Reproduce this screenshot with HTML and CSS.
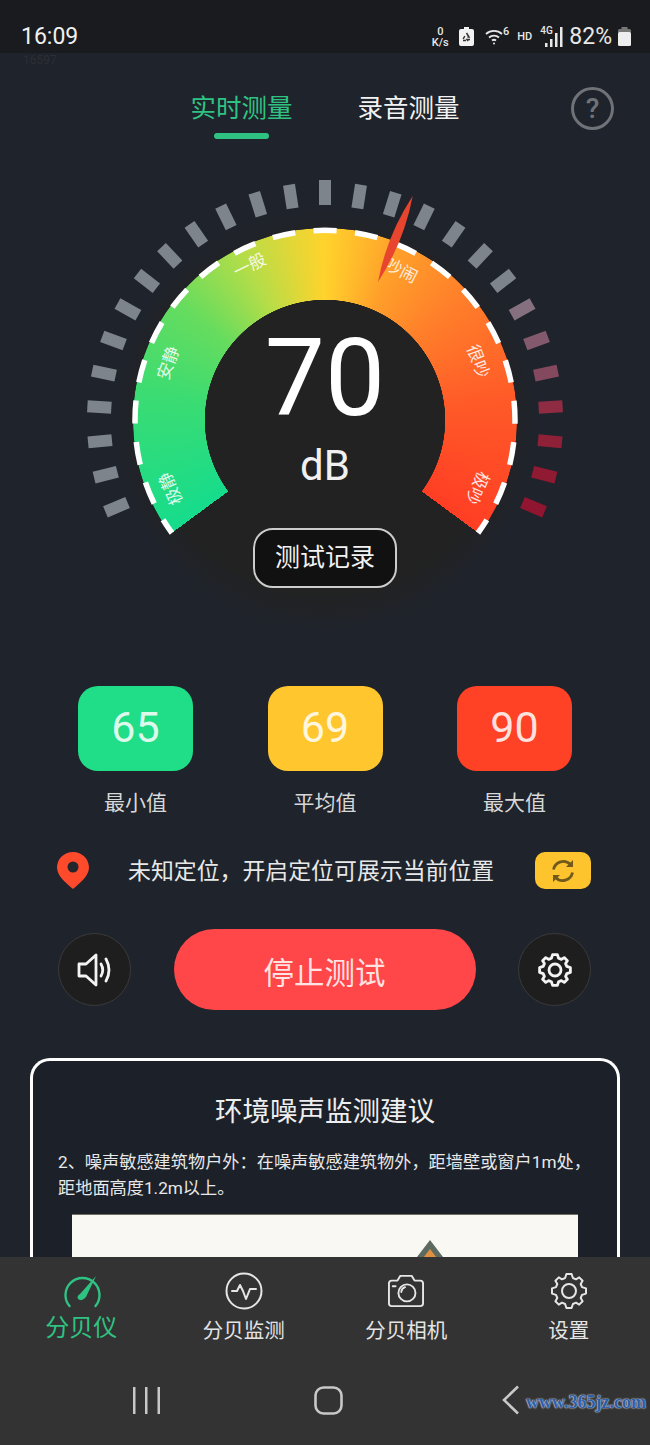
FILE: index.html
```html
<!DOCTYPE html>
<html lang="zh-CN">
<head>
  <meta charset="UTF-8">
  <meta name="viewport" content="width=device-width, initial-scale=1">
  <title>分贝仪</title>
  <link rel="stylesheet" href="styles.css">
</head>
<body>
<div class="phone">

  <!-- status bar -->
  <div class="status">
    <span class="status-time">16:09</span>
    <div class="status-icons">
      <span class="speed">0<br>K/s</span>
      <svg class="ic-saver" width="15" height="19" viewBox="0 0 15 19">
        <path d="M5 0h5v2h3a2 2 0 0 1 2 2v13a2 2 0 0 1-2 2H2a2 2 0 0 1-2-2V4a2 2 0 0 1 2-2h3z" fill="#f2f2f2"/>
        <path d="M7.5 6l2.5 4h-1.6M4.2 12l1.6-3M11 12.5H8l1 1.6M4 13.5h3" fill="none" stroke="#333" stroke-width="1.5"/>
      </svg>
      <span class="wifi">
        <svg width="18" height="18" viewBox="0 0 18 18" fill="none" stroke="#e8e8e8" stroke-width="1.8">
          <path d="M1 7a12 12 0 0 1 16 0"/>
          <path d="M4 10.5a7.500 7.500 0 0 1 10 0"/>
          <path d="M7 13.500a3.200 3.200 0 0 1 4 0"/>
          <circle cx="9" cy="16.500" r="1" fill="#e8e8e8" stroke="none"/>
        </svg>
        <b class="wifi-num">6</b>
      </span>
      <span class="hd">HD</span>
      <span class="signal">
        <b class="signal-4g">4G</b>
        <svg width="19" height="20" viewBox="0 0 19 20" fill="#e8e8e8">
          <rect x="0" y="16" width="2.500" height="4"/>
          <rect x="5" y="12" width="2.500" height="8"/>
          <rect x="10" y="6" width="2.500" height="14"/>
          <rect x="15" y="0" width="2.500" height="20"/>
        </svg>
      </span>
      <span class="status-pct">82%</span>
      <svg width="13" height="19" viewBox="0 0 13 19">
        <rect x="3.500" y="0" width="6" height="3" fill="#777"/>
        <rect x="0" y="2" width="13" height="4" rx="1.500" fill="#777"/>
        <rect x="0" y="5" width="13" height="14" rx="1.500" fill="#eee"/>
      </svg>
    </div>
  </div>

  <div class="main">
    <div class="ghost">16597</div>

    <!-- tabs -->
    <div class="tabs">
      <div class="tabs-list">
        <div class="tab tab-on">实时测量<i class="tab-bar"></i></div>
        <div class="tab">录音测量</div>
      </div>
      <div class="help">?</div>
    </div>

    <!-- gauge -->
    <div class="gauge">
      <div class="gauge-disc"></div>
      <div class="gauge-arc"></div>
      <svg class="gauge-svg" width="500" height="450" viewBox="0 0 500 450">
        <g stroke="#7e848c" stroke-width="12">
          <line x1="250" y1="12" x2="250" y2="36" transform="rotate(-112.7 250 250)"/>
          <line x1="250" y1="12" x2="250" y2="36" transform="rotate(-104 250 250)"/>
          <line x1="250" y1="12" x2="250" y2="36" transform="rotate(-95.4 250 250)"/>
          <line x1="250" y1="12" x2="250" y2="36" transform="rotate(-86.7 250 250)"/>
          <line x1="250" y1="12" x2="250" y2="36" transform="rotate(-78 250 250)"/>
          <line x1="250" y1="12" x2="250" y2="36" transform="rotate(-69.4 250 250)"/>
          <line x1="250" y1="12" x2="250" y2="36" transform="rotate(-60.7 250 250)"/>
          <line x1="250" y1="12" x2="250" y2="36" transform="rotate(-52 250 250)"/>
          <line x1="250" y1="12" x2="250" y2="36" transform="rotate(-43.4 250 250)"/>
          <line x1="250" y1="12" x2="250" y2="36" transform="rotate(-34.7 250 250)"/>
          <line x1="250" y1="12" x2="250" y2="36" transform="rotate(-26 250 250)"/>
          <line x1="250" y1="12" x2="250" y2="36" transform="rotate(-17.3 250 250)"/>
          <line x1="250" y1="12" x2="250" y2="36" transform="rotate(-8.7 250 250)"/>
          <line x1="250" y1="10" x2="250" y2="35"/>
          <line x1="250" y1="12" x2="250" y2="36" transform="rotate(8.7 250 250)"/>
          <line x1="250" y1="12" x2="250" y2="36" transform="rotate(17.3 250 250)"/>
          <line x1="250" y1="12" x2="250" y2="36" transform="rotate(26 250 250)"/>
          <line x1="250" y1="12" x2="250" y2="36" transform="rotate(34.7 250 250)"/>
          <line x1="250" y1="12" x2="250" y2="36" transform="rotate(43.4 250 250)"/>
          <line x1="250" y1="12" x2="250" y2="36" transform="rotate(52 250 250)"/>
          <line x1="250" y1="12" x2="250" y2="36" stroke="#84707e" transform="rotate(60.7 250 250)"/>
          <line x1="250" y1="12" x2="250" y2="36" stroke="#82596d" transform="rotate(69.4 250 250)"/>
          <line x1="250" y1="12" x2="250" y2="36" stroke="#84485f" transform="rotate(78 250 250)"/>
          <line x1="250" y1="12" x2="250" y2="36" stroke="#8f2c44" transform="rotate(86.7 250 250)"/>
          <line x1="250" y1="12" x2="250" y2="36" stroke="#8e2038" transform="rotate(95.4 250 250)"/>
          <line x1="250" y1="12" x2="250" y2="36" stroke="#911a33" transform="rotate(104 250 250)"/>
          <line x1="250" y1="12" x2="250" y2="36" stroke="#8f1530" transform="rotate(112.7 250 250)"/>
        </g>
        <!-- dashes on the outer edge, 126.4deg each side of the top -->
        <path class="gauge-dash" d="M97 363A190 190 0 1 1 403 363"/>
        <g class="gauge-labels">
          <text x="250" y="81" transform="rotate(-114 250 250)">极静</text>
          <text x="250" y="83" transform="rotate(-70 250 250)">安静</text>
          <text x="250" y="78" transform="rotate(-26 250 250)">一般</text>
          <text x="250" y="82" transform="rotate(27 250 250)">吵闹</text>
          <text x="250" y="86" transform="rotate(69 250 250)">很吵</text>
          <text x="250" y="83" transform="rotate(114 250 250)">极吵</text>
        </g>
        <path d="M337.700 26Q329 72 303 112Q311.500 66 337.700 26Z" fill="#e8452f"/>
      </svg>
      <div class="gauge-num">70</div>
      <div class="gauge-unit">dB</div>
      <div class="gauge-btn">测试记录</div>
    </div>

    <!-- min / avg / max -->
    <div class="stats">
      <div class="stat">
        <div class="stat-box stat-green">65</div>
        <div class="stat-label">最小值</div>
      </div>
      <div class="stat">
        <div class="stat-box stat-yellow">69</div>
        <div class="stat-label">平均值</div>
      </div>
      <div class="stat">
        <div class="stat-box stat-red">90</div>
        <div class="stat-label">最大值</div>
      </div>
    </div>

    <!-- location -->
    <div class="loc">
      <svg width="32" height="37" viewBox="0 0 32 37">
        <path d="M16 0C7 0 0 7 0 15.500C0 24 9 31 16 37C23 31 32 24 32 15.500C32 7 25 0 16 0Z" fill="#ff4a2c"/>
        <circle cx="16" cy="15" r="5.500" fill="#23262c"/>
      </svg>
      <div class="loc-text">未知定位，开启定位可展示当前位置</div>
      <div class="loc-btn">
        <svg width="26" height="26" viewBox="0 0 26 26" fill="none" stroke="#72591c" stroke-width="2.800">
          <path d="M3.500 11.500A10 10 0 0 1 20.500 6.500"/>
          <path d="M22.500 14.500A10 10 0 0 1 5.500 19.500"/>
          <path d="M23 2v7h-7z" fill="#72591c" stroke="none"/>
          <path d="M3 24v-7h7z" fill="#72591c" stroke="none"/>
        </svg>
      </div>
    </div>

    <!-- controls -->
    <div class="controls">
      <div class="round-btn">
        <svg width="36" height="34" viewBox="0 0 36 34" fill="none" stroke="#f4f4f4" stroke-width="2.800" stroke-linejoin="round" stroke-linecap="round">
          <path d="M2 11H9L19 2V32L9 23H2Z"/>
          <path d="M24 11Q27.500 17 24 23"/>
          <path d="M29 6Q35 17 29 28"/>
        </svg>
      </div>
      <div class="stop-btn">停止测试</div>
      <div class="round-btn">
        <svg width="36" height="36" viewBox="-18 -18 36 36" fill="none" stroke="#f4f4f4" stroke-width="2.800" stroke-linejoin="round">
          <path d="M-2.400-15.400L2.400-15.400 3.600-11.800 6.400-10.600 9.200-12.400 12.400-9.200 10.600-6.400 11.800-3.600 15.400-2.400 15.400 2.400 11.800 3.600 10.600 6.400 12.400 9.200 9.200 12.400 6.400 10.600 3.600 11.800 2.400 15.400-2.400 15.400-3.600 11.800-6.400 10.600-9.200 12.400-12.400 9.200-10.600 6.400-11.800 3.600-15.400 2.400-15.400-2.400-11.800-3.600-10.600-6.400-12.400-9.200-9.200-12.400-6.400-10.600-3.600-11.800Z"/>
          <circle r="6"/>
        </svg>
      </div>
    </div>

    <!-- advice card, runs under the tab bar -->
    <div class="card">
      <div class="card-title">环境噪声监测建议</div>
      <p class="card-text">2、噪声敏感建筑物户外：在噪声敏感建筑物外，距墙壁或窗户1m处，距地面高度1.2m以上。</p>
      <svg class="card-pic" width="506" height="60" viewBox="0 0 506 60">
        <rect width="506" height="60" fill="#faf8f2"/>
        <rect width="506" height="1" fill="#6e6e62"/>
        <path d="M358 26L384 60H332Z" fill="#5d6a60"/>
        <path d="M358 35L377 60H339Z" fill="#e0913f"/>
      </svg>
    </div>
  </div>

  <!-- bottom tabs + system nav -->
  <div class="nav">
    <div class="nav-tabs">
      <div class="nav-item nav-on">
        <svg width="40" height="36" viewBox="0 0 40 36" fill="none" stroke="#2fc383" stroke-width="2.400" stroke-linecap="round">
          <path d="M8.500 33A17 17 0 1 1 34.500 33"/>
          <path d="M35 3L25 24Q21 29 17 26Q15.500 23 19 21Z" fill="#2fc383" stroke="none"/>
        </svg>
        <span class="nav-label">分贝仪</span>
      </div>
      <div class="nav-item">
        <svg width="38" height="38" viewBox="0 0 38 38" fill="none" stroke="#e6e6e6" stroke-width="2" stroke-linejoin="round" stroke-linecap="round">
          <circle cx="19" cy="19" r="17.500"/>
          <path d="M7 19H12L15 13 18 19 21 27 25 17H31"/>
        </svg>
        <span class="nav-label">分贝监测</span>
      </div>
      <div class="nav-item">
        <svg width="36" height="34" viewBox="0 0 38 36" fill="none" stroke="#e6e6e6" stroke-width="2" stroke-linejoin="round" stroke-linecap="round">
          <path d="M4 7H10L13 2H25L28 7H34Q37 7 37 10V31Q37 34 34 34H4Q1 34 1 31V10Q1 7 4 7Z"/>
          <circle cx="20" cy="20" r="9"/>
          <path d="M18 14A6 6 0 0 0 14 19"/>
          <path d="M5 13H8"/>
        </svg>
        <span class="nav-label">分贝相机</span>
      </div>
      <div class="nav-item">
        <svg width="38" height="38" viewBox="-19 -19 38 38" fill="none" stroke="#e6e6e6" stroke-width="2" stroke-linejoin="round">
          <path d="M-2.600-17L2.600-17 3.900-13 7-11.700 10.200-13.600 13.600-10.200 11.700-7 13-3.900 17-2.600 17 2.600 13 3.900 11.700 7 13.600 10.200 10.200 13.600 7 11.700 3.900 13 2.600 17-2.600 17-3.900 13-7 11.700-10.200 13.600-13.600 10.200-11.700 7-13 3.900-17 2.600-17-2.600-13-3.900-11.700-7-13.600-10.200-10.200-13.600-7-11.700-3.900-13Z"/>
          <circle r="7"/>
        </svg>
        <span class="nav-label">设置</span>
      </div>
    </div>
    <div class="sys-nav">
      <svg width="27" height="27" viewBox="0 0 27 27" fill="#c8c8c8">
        <rect x="0" y="0" width="2.500" height="27"/>
        <rect x="12" y="0" width="2.500" height="27"/>
        <rect x="24.500" y="0" width="2.500" height="27"/>
      </svg>
      <svg class="sys-home" width="29" height="29" viewBox="0 0 29 29" fill="none" stroke="#c8c8c8" stroke-width="2.600">
        <rect x="1.500" y="1.500" width="26" height="26" rx="8"/>
      </svg>
      <svg class="sys-back" width="18" height="30" viewBox="0 0 18 30" fill="none" stroke="#c8c8c8" stroke-width="2.600">
        <path d="M16 1.500L2 15 16 28.500"/>
      </svg>
    </div>
    <div class="mark">www.365jz.com</div>
  </div>
</div>
</body>
</html>
```

FILE: styles.css
```css
/* base */
html, body {
  margin: 0;
  padding: 0;
}

body {
  font-family: Roboto, "Noto Sans CJK SC", sans-serif;
  color: #fff;
}

.phone {
  position: relative;
  width: 650px;
  height: 1445px;
  display: flex;
  flex-direction: column;
  overflow: hidden;
  background: #1f232b;
}

/* status bar */
.status {
  flex: none;
  height: 53px;
  box-sizing: border-box;
  padding: 20px 19px 0 21px;
  display: flex;
  align-items: center;
  justify-content: space-between;
  background: #191b1e;
}

.status-time {
  font-size: 23px;
  color: #f0f0f0;
}

.status-icons {
  display: flex;
  align-items: center;
  color: #e8e8e8;
}

.speed {
  width: 20px;
  margin-right: 9px;
  font-size: 11px;
  line-height: 11px;
  font-weight: 500;
  text-align: center;
}

.wifi {
  position: relative;
  width: 24px;
  height: 20px;
  margin-left: 11px;
  margin-right: 8px;
}

.wifi-num {
  position: absolute;
  right: 0;
  top: -2px;
  font-size: 11px;
  font-weight: 500;
}

.hd {
  font-size: 11px;
  font-weight: 500;
  margin-right: 8px;
}

.signal {
  position: relative;
  width: 24px;
  height: 20px;
  display: flex;
  justify-content: flex-end;
  margin-right: 5px;
}

.signal-4g {
  position: absolute;
  left: 0;
  top: -2px;
  font-size: 10px;
  font-weight: 500;
}

.status-pct {
  font-size: 23px;
  margin-right: 6px;
}

/* main scroll area */
.main {
  flex: 1;
  min-height: 0;
  overflow: hidden;
}

.ghost {
  height: 14px;
  padding-left: 23px;
  font-size: 12px;
  line-height: 14px;
  color: #2b2f36;
}

/* tabs */
.tabs {
  margin-top: 23px;
  display: grid;
  grid-template-columns: 1fr auto 1fr;
  align-items: start;
}

.tabs-list {
  grid-column: 2;
  display: flex;
  gap: 65px;
}

.tab {
  position: relative;
  height: 49px;
  font-size: 25.500px;
  line-height: 36px;
  color: #f2f2f2;
}

.tab-on {
  color: #2fc383;
}

.tab-bar {
  display: block;
  width: 55px;
  height: 6px;
  margin: 7px auto 0;
  border-radius: 3px;
  background: #2fc383;
}

.help {
  grid-column: 3;
  justify-self: end;
  box-sizing: border-box;
  width: 43px;
  height: 43px;
  margin-right: 36px;
  margin-top: -3px;
  border: 3px solid #6f7277;
  border-radius: 50%;
  font-size: 28px;
  font-weight: 500;
  line-height: 37px;
  text-align: center;
  color: #6f7277;
}

/* gauge */
.gauge {
  position: relative;
  width: 500px;
  height: 450px;
  margin: 31px auto 0;
  box-sizing: border-box;
  padding-top: 154px;
  display: flex;
  flex-direction: column;
  align-items: center;
}

.gauge-disc {
  position: absolute;
  left: 40px;
  top: 40px;
  width: 420px;
  height: 420px;
  border-radius: 50%;
  background: radial-gradient(circle closest-side, #222 0, #222 82%, #1f232b 100%);
}

.gauge-arc {
  position: absolute;
  left: 58px;
  top: 58px;
  width: 384px;
  height: 384px;
  border-radius: 50%;
  background: conic-gradient(from 233.600deg, #16dc8c 0deg, #3bdc72 45deg, #66dc5e 75deg, #b5dd48 100deg, #ffd32c 126deg, #ff9f2a 150deg, #ff7e2a 175deg, #ff5a28 210deg, #ff3e24 252.800deg, transparent 252.800deg);
  -webkit-mask: radial-gradient(circle closest-side, transparent 120px, #000 120.500px);
  mask: radial-gradient(circle closest-side, transparent 120px, #000 120.500px);
}

.gauge-svg {
  position: absolute;
  left: 0;
  top: 0;
}

.gauge-dash {
  fill: none;
  stroke: #fff;
  stroke-width: 5.500;
  stroke-dasharray: 23 18.450;
  stroke-dashoffset: 7;
}

.gauge-labels text {
  font-size: 17px;
  text-anchor: middle;
  dominant-baseline: central;
  fill: rgba(255, 255, 255, 0.85);
}

.gauge-num {
  position: relative;
  font-size: 107px;
  line-height: 110px;
}

.gauge-unit {
  position: relative;
  margin-top: 12px;
  font-size: 42px;
  line-height: 40px;
  color: #f0f0f0;
}

.gauge-btn {
  position: relative;
  box-sizing: border-box;
  width: 144px;
  height: 60px;
  margin-top: 42px;
  border: 2px solid #ccc;
  border-radius: 20px;
  background: #111;
  font-size: 25px;
  line-height: 56px;
  text-align: center;
  color: #f2f2f2;
}

/* stats */
.stats {
  margin-top: 66px;
  padding: 0 78px;
  display: flex;
  justify-content: space-between;
}

.stat {
  width: 115px;
}

.stat-box {
  height: 85px;
  border-radius: 20px;
  font-size: 43px;
  line-height: 83px;
  text-align: center;
  color: rgba(255, 255, 255, 0.85);
}

.stat-green { background: #20dd88; }
.stat-yellow { background: #ffc62e; }
.stat-red { background: #ff4226; }

.stat-label {
  margin-top: 18px;
  margin-bottom: 1px;
  font-size: 21px;
  line-height: 28px;
  text-align: center;
  color: #d8d8d8;
}

/* location row */
.loc {
  margin-top: 34px;
  padding: 0 59px 0 57px;
  display: flex;
  align-items: center;
}

.loc-text {
  flex: 1;
  margin-left: 39px;
  padding-top: 2px;
  font-size: 22.900px;
  line-height: 35px;
  color: #e8e8e8;
}

.loc-btn {
  width: 56px;
  height: 37px;
  border-radius: 10px;
  background: #fdc42e;
  display: flex;
  align-items: center;
  justify-content: center;
}

/* controls */
.controls {
  margin-top: 40px;
  padding: 0 59px 0 58px;
  display: flex;
  align-items: center;
  justify-content: space-between;
}

.round-btn {
  box-sizing: border-box;
  width: 73px;
  height: 73px;
  border: 1px solid #3a3a3a;
  border-radius: 50%;
  background: #1e1e1e;
  display: flex;
  align-items: center;
  justify-content: center;
}

.stop-btn {
  box-sizing: border-box;
  width: 302px;
  height: 81px;
  padding-top: 8px;
  border-radius: 41px;
  background: #ff474a;
  font-size: 30.500px;
  line-height: 73px;
  text-align: center;
  color: rgba(255, 255, 255, 0.85);
}

/* advice card */
.card {
  margin: 48px 30px 0;
  padding: 31px 25px 0;
  border: 3px solid #fff;
  border-bottom: none;
  border-radius: 20px 20px 0 0;
  background: #1c2028;
}

.card-title {
  font-size: 27.500px;
  line-height: 40px;
  text-align: center;
  color: #eee;
}

.card-text {
  margin: 17px -4px 0 0;
  font-size: 17.200px;
  line-height: 26px;
  color: #e8e8e8;
}

.card-pic {
  display: block;
  margin: 13px 0 0 14px;
}

/* bottom nav */
.nav {
  flex: none;
  height: 188px;
  background: #333;
}

.nav-tabs {
  padding-top: 15px;
  display: grid;
  grid-template-columns: repeat(4, 1fr);
}

.nav-item {
  display: flex;
  flex-direction: column;
  align-items: center;
}

.nav-item svg {
  height: 38px;
}

.nav-label {
  margin-top: 6px;
  font-size: 20.500px;
  line-height: 30px;
  color: #e4e4e4;
}

.nav-on .nav-label {
  margin-top: 3px;
  font-size: 24px;
  color: #2fc383;
}

.sys-nav {
  margin-top: 39px;
  padding-left: 133px;
  display: flex;
  align-items: center;
}

.sys-home {
  margin-left: 154px;
}

.sys-back {
  margin-left: 159px;
}

.mark {
  position: absolute;
  right: 4px;
  bottom: 33px;
  font-family: "Liberation Serif", serif;
  font-size: 18px;
  font-weight: 700;
  line-height: 20px;
  color: #2c5ea8;
  text-shadow: 0 0 2px #dfe8f5, 0 0 1px #dfe8f5;
}
```
